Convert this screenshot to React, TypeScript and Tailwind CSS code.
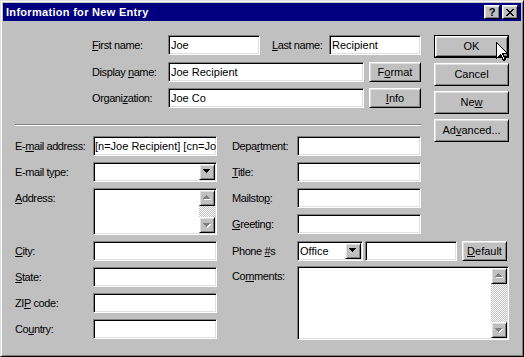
import type { ReactNode } from "react";

const sunken =
  "bg-white border border-t-[#808080] border-l-[#808080] border-r-white border-b-white shadow-[inset_1px_1px_0_#000,inset_-1px_-1px_0_#dfdfdf]";
const raised =
  "bg-[#c0c0c0] border border-t-white border-l-white border-r-black border-b-black shadow-[inset_1px_1px_0_#dfdfdf,inset_-1px_-1px_0_#808080]";
const lbl = "tracking-[-0.4px] whitespace-nowrap";

function Tri({ dir, disabled }: { dir: "up" | "down"; disabled?: boolean }) {
  const rows = [0, 1, 2, 3];
  const y = (i: number) => (dir === "up" ? i : 3 - i);
  return (
    <svg width="9" height="6" shapeRendering="crispEdges">
      {disabled &&
        rows.map((i) => (
          <rect key={"s" + i} x={4 - i} y={y(i) + 1} width={2 * i + 1} height={1} fill="#fff" />
        ))}
      {rows.map((i) => (
        <rect key={i} x={3 - i} y={y(i)} width={2 * i + 1} height={1} fill={disabled ? "#808080" : "#000"} />
      ))}
    </svg>
  );
}

function Field({ className, children }: { className: string; children?: ReactNode }) {
  return (
    <div className={`${sunken} h-[20px] pl-[2px] flex items-center overflow-hidden whitespace-nowrap ${className}`}>
      {children}
    </div>
  );
}

function Combo({ className, value }: { className: string; value?: string }) {
  return (
    <div className={`${sunken} h-[20px] p-[1px] flex ${className}`}>
      <div className="flex-1 flex items-center pl-[1px] overflow-hidden whitespace-nowrap">{value}</div>
      <div className={`${raised} w-[16px] h-[16px] flex items-center justify-center pl-[1px]`}>
        <Tri dir="down" />
      </div>
    </div>
  );
}

function ScrollBox({ className }: { className: string }) {
  return (
    <div className={`${sunken} p-[1px] flex ${className}`}>
      <div className="flex-1" />
      <div className="w-[16px] flex flex-col">
        <div className={`${raised} h-[16px] flex items-center justify-center pl-[1px]`}>
          <Tri dir="up" disabled />
        </div>
        <div className="flex-1 bg-[repeating-conic-gradient(#fff_0_25%,#c0c0c0_0_50%)] bg-[length:2px_2px]" />
        <div className={`${raised} h-[16px] flex items-center justify-center pl-[1px] pt-[1px]`}>
          <Tri dir="down" disabled />
        </div>
      </div>
    </div>
  );
}

function Btn({ className, children }: { className: string; children: ReactNode }) {
  return <div className={`${raised} flex items-center justify-center ${className}`}>{children}</div>;
}

function Row({ label, children, lw }: { label: ReactNode; children: ReactNode; lw: string }) {
  return (
    <div className="flex items-center h-[20px]">
      <div className={`${lw} ${lbl}`}>{label}</div>
      {children}
    </div>
  );
}

export default function App() {
  return (
    <div className="w-[524px] h-[357px] relative bg-[#c0c0c0] border border-t-[#dfdfdf] border-l-[#dfdfdf] border-r-black border-b-black shadow-[inset_1px_1px_0_#fff,inset_-1px_-1px_0_#808080] p-[2px] font-['Liberation_Sans',Arial,sans-serif] text-[11px] leading-[13px] text-black select-none">
      <div className="h-[18px] bg-[#000080] flex items-center pl-[3px] pr-[3px]">
        <span className="flex-1 text-white font-bold tracking-[0.3px]">Information for New Entry</span>
        <Btn className="w-[16px] h-[14px] font-bold">?</Btn>
        <Btn className="w-[16px] h-[14px] ml-[2px]">
          <svg width="8" height="7" shapeRendering="crispEdges">
            <path d="M0 0h2v1h-2zM6 0h2v1h-2zM1 1h2v1h-2zM5 1h2v1h-2zM2 2h4v1h-4zM3 3h2v1h-2zM2 4h4v1h-4zM1 5h2v1h-2zM5 5h2v1h-2zM0 6h2v1h-2zM6 6h2v1h-2z" fill="#000" />
          </svg>
        </Btn>
      </div>

      <div className="pl-[12px]">
        <div className="flex mt-[14px]">
          <div className="w-[406px]">
            <div className="pl-[77px]">
              <Row lw="w-[76px]" label={<><u>F</u>irst name:</>}>
                <Field className="w-[92px]">Joe</Field>
                <div className={`ml-[12px] w-[57px] ${lbl}`}><u>L</u>ast name:</div>
                <Field className="w-[92px]">Recipient</Field>
              </Row>
              <div className="mt-[7px]">
                <Row lw="w-[76px]" label={<>Display <u>n</u>ame:</>}>
                  <Field className="w-[196px]">Joe Recipient</Field>
                  <Btn className="ml-[5px] w-[52px] h-[20px]">
                    <span>F<u>o</u>rmat</span>
                  </Btn>
                </Row>
              </div>
              <div className="mt-[6px]">
                <Row lw="w-[76px]" label={<>Organi<u>z</u>ation:</>}>
                  <Field className="w-[196px]">Joe Co</Field>
                  <Btn className="ml-[5px] w-[52px] h-[20px]">
                    <span><u>I</u>nfo</span>
                  </Btn>
                </Row>
              </div>
            </div>

            <div className="mt-[16px] h-[2px] border-t border-t-[#808080] border-b border-b-white" />

            <div className="mt-[10px] flex">
              <div className="w-[202px] flex flex-col gap-[6px]">
                <Row lw="w-[78px]" label={<>E-<u>m</u>ail address:</>}>
                  <Field className="w-[124px] !pl-[1px]">[n=Joe Recipient] [cn=Jo</Field>
                </Row>
                <Row lw="w-[78px]" label={<>E-mail t<u>y</u>pe:</>}>
                  <Combo className="w-[124px]" />
                </Row>
                <div className="flex h-[47px]">
                  <div className={`w-[78px] pt-[4px] ${lbl}`}><u>A</u>ddress:</div>
                  <ScrollBox className="w-[124px] h-[47px]" />
                </div>
              </div>
              <div className="ml-[15px] w-[189px] flex flex-col gap-[6px]">
                <Row lw="w-[65px]" label={<>Depa<u>r</u>tment:</>}>
                  <Field className="w-[124px]" />
                </Row>
                <Row lw="w-[65px]" label={<><u>T</u>itle:</>}>
                  <Field className="w-[124px]" />
                </Row>
                <Row lw="w-[65px]" label={<>Mailsto<u>p</u>:</>}>
                  <Field className="w-[124px]" />
                </Row>
                <Row lw="w-[65px]" label={<><u>G</u>reeting:</>}>
                  <Field className="w-[124px]" />
                </Row>
              </div>
            </div>
          </div>

          <div className="ml-[13px] w-[75px] flex flex-col gap-[5px]">
            <div className="h-[23px] border border-black">
              <Btn className="h-full">OK</Btn>
            </div>
            <Btn className="h-[23px]">Cancel</Btn>
            <Btn className="h-[23px]">
              <span>Ne<u>w</u></span>
            </Btn>
            <Btn className="h-[23px]">
              <span>Ad<u>v</u>anced...</span>
            </Btn>
          </div>
        </div>

        <div className="mt-[6px] flex">
          <div className="w-[202px] flex flex-col gap-[6px]">
            <Row lw="w-[78px]" label={<><u>C</u>ity:</>}>
              <Field className="w-[124px]" />
            </Row>
            <Row lw="w-[78px]" label={<><u>S</u>tate:</>}>
              <Field className="w-[124px]" />
            </Row>
            <Row lw="w-[78px]" label={<>ZI<u>P</u> code:</>}>
              <Field className="w-[124px]" />
            </Row>
            <Row lw="w-[78px]" label={<>Co<u>u</u>ntry:</>}>
              <Field className="w-[124px]" />
            </Row>
          </div>
          <div className="ml-[15px] w-[277px]">
            <Row lw="w-[65px]" label={<>Phone <u>#</u>s</>}>
              <Combo className="w-[66px]" value="Office" />
              <Field className="ml-[2px] w-[92px]" />
              <Btn className="ml-[5px] w-[45px] h-[20px]">
                <span><u>D</u>efault</span>
              </Btn>
            </Row>
            <div className="mt-[5px] flex">
              <div className={`w-[65px] pt-[4px] ${lbl}`}>Co<u>m</u>ments:</div>
              <ScrollBox className="w-[212px] h-[74px]" />
            </div>
          </div>
        </div>
      </div>

      <svg className="absolute left-[495px] top-[41px]" width="13" height="20" shapeRendering="crispEdges">
        <path d="M0.5 0.5 L0.5 16.5 L4.5 12.5 L7.5 18.5 L9.5 17.5 L6.5 11.5 L11.5 11.5 Z" fill="#fff" stroke="#000" strokeWidth="1" />
      </svg>
    </div>
  );
}
